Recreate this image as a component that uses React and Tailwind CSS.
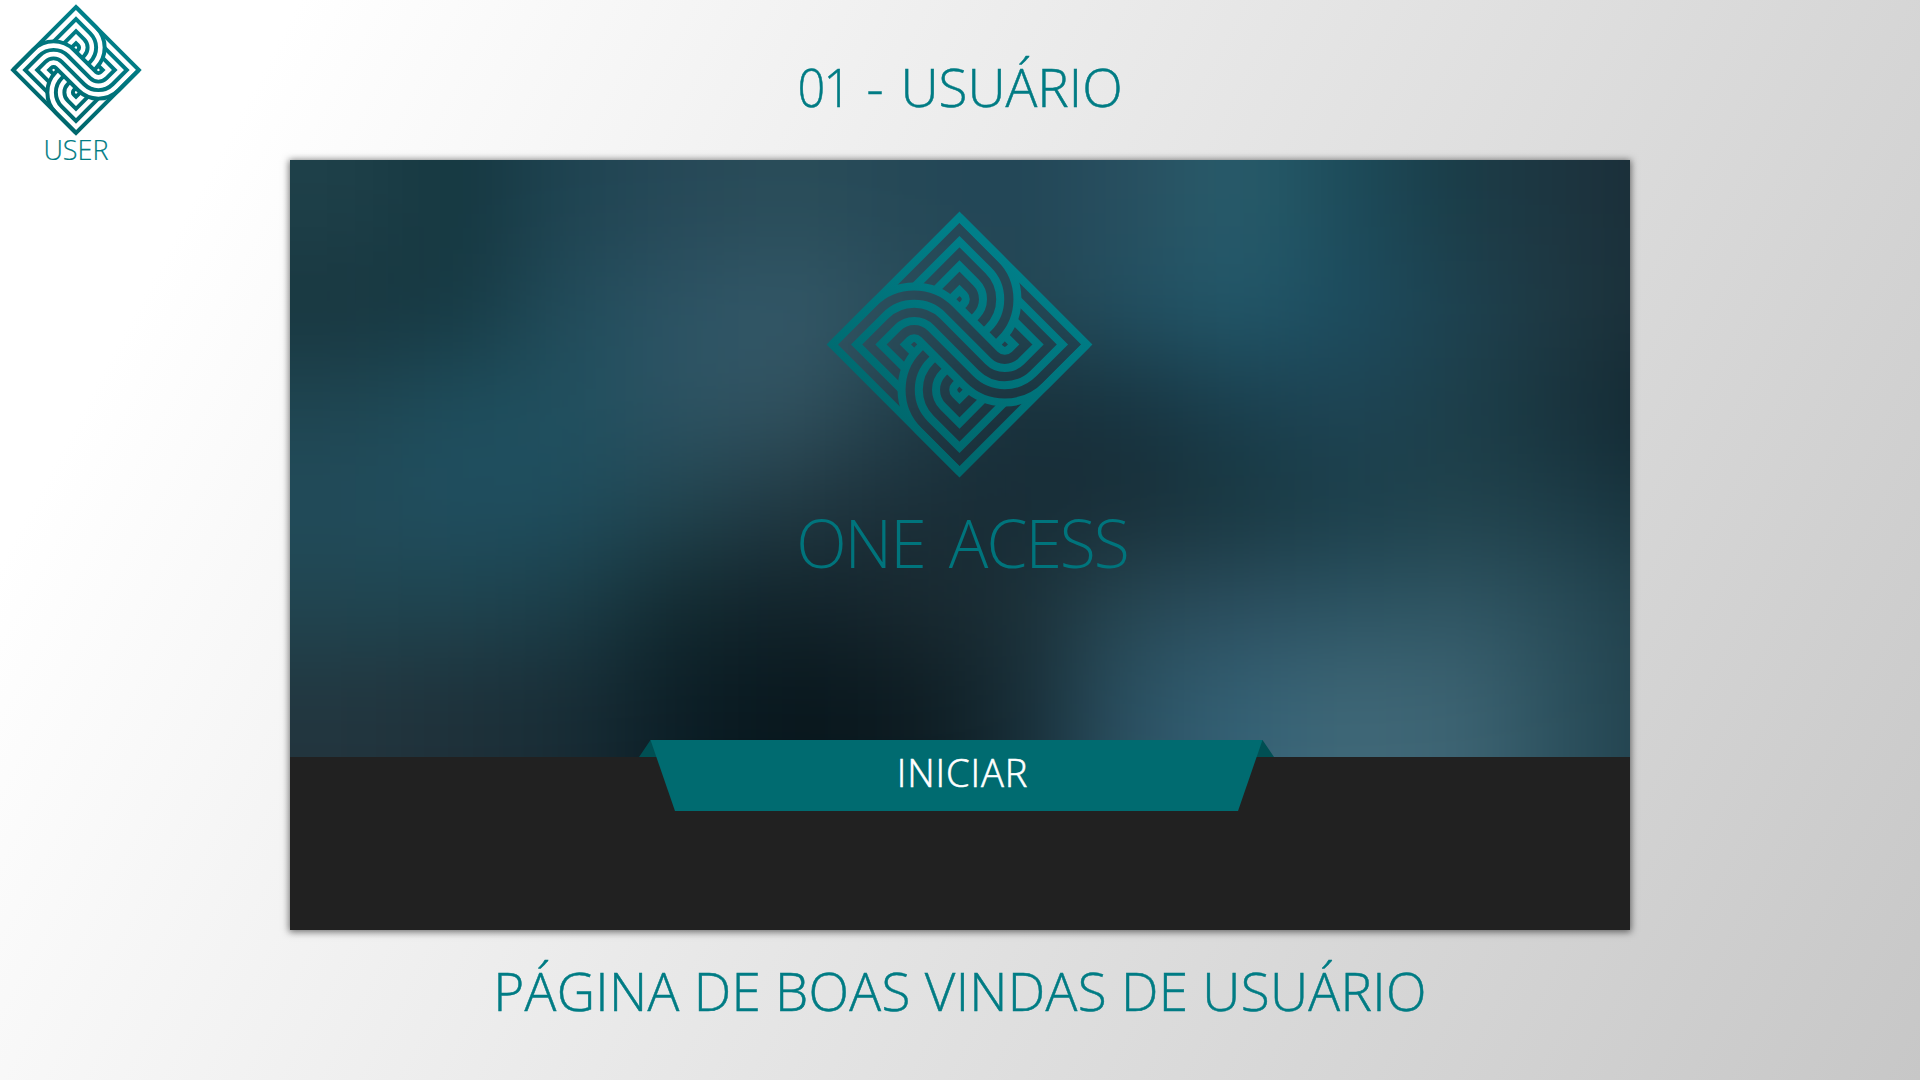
import React from "react";

const REACH = [381.25, 308.25, 235.25, 162.25];
const OFFSET = 135.75;
const HALF = REACH.map((h) => (h - OFFSET) / 2);
const RADIUS = HALF.map((t) => t * Math.SQRT2);
const STOPS = [null, [134.4, 173.6], [73.1, 161.9], [26.8, 135.2]];

// Horizontal strand: left tip, over the left bend, down the diagonal, round the right bend.
function overStrand(k) {
  const m = 3 - k;
  const t = HALF[k];
  const u = HALF[m];
  const from = STOPS[k] ? `M${-STOPS[k][1]} ${STOPS[k][0]}L` : "M";
  const to = STOPS[m] ? `L${STOPS[m][1]} ${-STOPS[m][0]}` : "";
  return (
    `${from}${-REACH[k]} 0L${-OFFSET - t} ${-t}` +
    `A${RADIUS[k]} ${RADIUS[k]} 0 0 1 ${-OFFSET + t} ${-t}` +
    `L${OFFSET - u} ${u}A${RADIUS[m]} ${RADIUS[m]} 0 0 0 ${OFFSET + u} ${u}` +
    `L${REACH[m]} 0${to}`
  );
}

// Vertical strand: outer tip, round the bend, tucked under the diagonal. s = 1 for the top, -1 for the bottom.
function underStrand(k, s) {
  const t = HALF[k];
  const e = HALF[3];
  const p = (x, y) => `${s * x} ${s * y}`;
  const from = STOPS[k] ? `M${p(-STOPS[k][0], -STOPS[k][1])}L` : "M";
  return (
    `${from}${p(0, -REACH[k])}L${p(t, -OFFSET - t)}` +
    `A${RADIUS[k]} ${RADIUS[k]} 0 0 1 ${p(t, -OFFSET + t)}` +
    `L${p(t - e, -OFFSET + t + e)}`
  );
}

function Logo({ id, className }) {
  return (
    <svg viewBox="-400 -400 800 800" className={className} aria-hidden="true">
      <defs>
        <linearGradient id={id} gradientUnits="userSpaceOnUse" x1="150" y1="-260" x2="-150" y2="260">
          <stop offset="0" stopColor="#007f89" />
          <stop offset="1" stopColor="#00686d" />
        </linearGradient>
      </defs>
      <g fill="none" stroke={`url(#${id})`} strokeWidth="24" strokeMiterlimit="10">
        <path d="M0-381.25L381.25 0L0 381.25L-381.25 0Z" />
        {[0, 1, 2, 3].map((k) => (
          <React.Fragment key={k}>
            <path d={overStrand(k)} />
            <path d={underStrand(k, 1)} />
            <path d={underStrand(k, -1)} />
          </React.Fragment>
        ))}
      </g>
    </svg>
  );
}

// Colour mesh of the blurred photo; the last column lies beyond the right edge.
const MESH = [
  ["#1e4049", "#153740", "#1f4452", "#274958", "#2a4d59", "#254857", "#224656", "#284f60", "#285c6b", "#1c4b5a", "#1b3c47", "#1d343f", "#182b35"],
  ["#18363f", "#163943", "#224c5b", "#2d5465", "#345969", "#2a4e5c", "#244652", "#225062", "#22586a", "#1c4c5f", "#1e4250", "#1e3741", "#192d36"],
  ["#1f4652", "#1f4e5d", "#20505f", "#2d5363", "#32525f", "#213e4a", "#182f3a", "#17333f", "#1a3f4e", "#1e4454", "#1c3e49", "#17313b", "#10232c"],
  ["#224c5b", "#1f4f60", "#1f4d5d", "#22444f", "#203842", "#1b2f39", "#172c36", "#182e38", "#183740", "#1b3e4a", "#20424c", "#1c3b46", "#15303a"],
  ["#204550", "#1f444f", "#1b3d48", "#12292f", "#11222a", "#18282f", "#1b2f37", "#274854", "#2c4f60", "#2c5463", "#305664", "#284b57", "#1d3c47"],
  ["#22353e", "#1e3039", "#182c35", "#0b1d25", "#08161c", "#0c1a20", "#162b34", "#2b5163", "#346276", "#406878", "#3d6473", "#2a4e5b", "#1f3d48"],
];

function Backdrop() {
  const w = 1340 / 12;
  const h = 597 / 6;
  const cells = [];
  for (let j = -2; j < 8; j++) {
    for (let i = -2; i < 14; i++) {
      const color = MESH[Math.min(5, Math.max(0, j))][Math.min(12, Math.max(0, i))];
      cells.push(<rect key={`${i},${j}`} x={i * w} y={j * h} width={w + 1} height={h + 1} fill={color} />);
    }
  }
  return (
    <svg viewBox="0 0 1340 597" className="absolute inset-0 size-full" aria-hidden="true">
      <filter id="soften" filterUnits="userSpaceOnUse" x="-230" y="-200" width="1800" height="997" colorInterpolationFilters="sRGB">
        <feGaussianBlur stdDeviation="49" />
      </filter>
      <g filter="url(#soften)">{cells}</g>
    </svg>
  );
}

export default function App() {
  return (
    <div className="grid h-[1080px] w-[1920px] grid-cols-[290px_1340px_290px] overflow-hidden bg-[linear-gradient(118deg,#ffffff_12%,#c7c7c7_100%)] font-['Open_Sans',sans-serif] font-light text-[#007c84]">
      <aside className="flex w-[152px] flex-col items-center pt-[4px]">
        <Logo id="logo-small" className="size-[132px]" />
        <span className="-mt-[1px] text-[27px] leading-[30px] whitespace-nowrap [-webkit-text-stroke:0.2px_currentColor]">USER</span>
      </aside>

      <main className="flex flex-col">
        <h1 className="flex h-[160px] justify-center pt-[34px] pr-[4px] text-[53px] leading-[106px] font-light whitespace-pre [-webkit-text-stroke:0.5px_currentColor]">
          <span className="inline-block origin-right scale-x-92 tracking-[-2px]">01</span>
          <span className="mr-[3px] ml-[3px]"> - </span>
          <span>USUÁRIO</span>
        </h1>

        <section className="relative flex h-[770px] flex-col bg-[#212121] shadow-[0_1px_7px_1px_rgba(0,0,0,0.55)]">
          <div className="relative flex h-[597px] flex-col items-center overflow-hidden pt-[51px]">
            <Backdrop />
            <Logo id="logo-large" className="relative -ml-px size-[267px]" />
            <p className="relative mt-[4px] ml-[4px] text-[66px] leading-[120px] tracking-[-2px] whitespace-nowrap text-[#00747c] [word-spacing:9px]">
              ONE ACESS
            </p>
          </div>
          <button className="absolute top-[580px] left-[349px] flex h-[71px] w-[635px] justify-center text-white">
            <svg viewBox="0 0 635 71" className="absolute inset-0 size-full" aria-hidden="true">
              <path d="M11.5 0L0 17H18L24 0ZM623.5 0L635 17H616L610 0Z" fill="#004f53" />
              <path d="M11.5 0H623.5L599 71H36Z" fill="#006b70" />
            </svg>
            <span className="relative ml-[12px] text-[38px] leading-[64px] tracking-[0.9px] whitespace-nowrap [-webkit-text-stroke:0.6px_currentColor]">
              INICIAR
            </span>
          </button>
        </section>

        <p className="flex justify-center pt-[8px] text-[53px] leading-[106px] tracking-[0.3px] whitespace-nowrap [-webkit-text-stroke:0.5px_currentColor]">
          PÁGINA DE BOAS VINDAS DE USUÁRIO
        </p>
      </main>
    </div>
  );
}
